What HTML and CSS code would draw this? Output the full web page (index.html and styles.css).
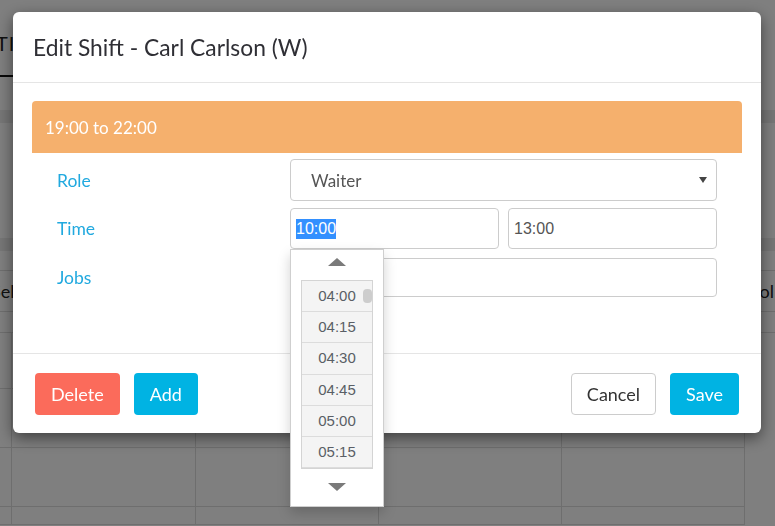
FILE: index.html
```html
<!DOCTYPE html>
<html lang="en">
<head>
    <meta charset="UTF-8" />
    <meta name="viewport" content="width=device-width, initial-scale=1.0" />
    <title>Edit Shift</title>
    <link rel="stylesheet" href="styles.css">
</head>
<body>

<!-- page behind the modal -->
<div class="page">
    <div class="page-tabs">
        <span class="page-tab">TI</span>
    </div>
    <div class="page-band band-top"></div>
    <div class="page-band band-mid"></div>
    <div class="page-row">
        <span class="page-row-left">Sele</span>
        <span class="page-row-right">Tool</span>
    </div>
    <div class="page-grid">
        <div class="grid-cell"></div><div class="grid-cell"></div><div class="grid-cell"></div><div class="grid-cell"></div><div class="grid-cell"></div>
        <div class="grid-cell"></div><div class="grid-cell"></div><div class="grid-cell"></div><div class="grid-cell"></div><div class="grid-cell"></div>
        <div class="grid-cell"></div><div class="grid-cell"></div><div class="grid-cell"></div><div class="grid-cell"></div><div class="grid-cell"></div>
        <div class="grid-cell"></div><div class="grid-cell"></div><div class="grid-cell"></div><div class="grid-cell"></div><div class="grid-cell"></div>
    </div>
</div>

<div class="backdrop"></div>

<div class="modal-wrap">
    <div class="modal">
        <div class="modal-header">
            <h4 class="modal-title">Edit Shift - Carl Carlson (W)</h4>
        </div>

        <div class="modal-body">
            <div class="shift-bar">19:00 to 22:00</div>

            <div class="shift-form">
                <div class="form-row row-role">
                    <label class="form-label">Role</label>
                    <div class="form-control select-box">
                        <span>Waiter</span>
                        <span class="select-caret"></span>
                    </div>
                </div>

                <div class="form-row row-time">
                    <label class="form-label">Time</label>
                    <div class="time-pair">
                        <div class="time-field">
                            <div class="form-control text-input"><span class="selected-text">10:00</span></div>

                            <div class="time-picker">
                                <div class="picker-up"><span class="arrow-up"></span></div>
                                <div class="picker-list">
                                    <div class="picker-item">04:00</div>
                                    <div class="picker-item">04:15</div>
                                    <div class="picker-item">04:30</div>
                                    <div class="picker-item">04:45</div>
                                    <div class="picker-item">05:00</div>
                                    <div class="picker-item">05:15</div>
                                    <span class="picker-thumb"></span>
                                </div>
                                <div class="picker-down"><span class="arrow-down"></span></div>
                            </div>
                        </div>
                        <div class="time-field">
                            <div class="form-control text-input">13:00</div>
                        </div>
                    </div>
                </div>

                <div class="form-row row-jobs">
                    <label class="form-label">Jobs</label>
                    <div class="form-control text-input"></div>
                </div>
            </div>
        </div>

        <div class="modal-footer">
            <div class="footer-group">
                <button class="btn btn-delete">Delete</button>
                <button class="btn btn-primary">Add</button>
            </div>
            <div class="footer-group">
                <button class="btn btn-default">Cancel</button>
                <button class="btn btn-primary">Save</button>
            </div>
        </div>
    </div>
</div>

</body>
</html>
```

FILE: styles.css
```css
:root {
    --blue: #00b3e3;
    --label-blue: #21a9df;
    --coral: #fb6b5b;
    --orange: #f5b06d;
    --border: #cccccc;
    --text: #333333;
    --muted: #555555;
}

* {
    box-sizing: border-box;
}

body {
    margin: 0;
    font-family: 'Lato', 'Open Sans', sans-serif;
    color: var(--text);
    background: #ffffff;
    overflow: hidden;
}

/* ---------- page behind ---------- */

.page {
    height: 526px;
    overflow: hidden;
}

.page-tabs {
    height: 77px;
    padding-top: 31px;
}

.page-tab {
    display: inline-block;
    width: 200px;
    height: 46px;
    margin-left: -4px;
    border-bottom: 2px solid #111;
    font-size: 20px;
    letter-spacing: 1px;
    color: #222;
}

.page-band {
    height: 13px;
    background: #ececec;
}

.band-top {
    margin-top: 33px;
}

.band-mid {
    margin-top: 115px;
}

.page-row {
    display: flex;
    justify-content: space-between;
    align-items: center;
    height: 42px;
    margin-top: 19px;
    border-top: 1px solid #ddd;
    border-bottom: 1px solid #ddd;
    font-size: 18px;
    color: #222;
}

.page-row-left {
    margin-left: -9px;
}

.page-row-right {
    margin-right: 1px;
}

.page-grid {
    display: grid;
    grid-template-columns: 12px 184px 183px 183px 183px;
    grid-template-rows: 56px 59px 59px 18px;
    margin-top: 20px;
    border-top: 1px solid #ddd;
}

.grid-cell {
    border-right: 1px solid #ddd;
    border-bottom: 1px solid #ddd;
}

.backdrop {
    position: fixed;
    inset: 0;
    background: rgba(0, 0, 0, 0.5);
}

/* ---------- modal ---------- */

.modal-wrap {
    position: fixed;
    inset: 0;
}

.modal {
    width: 748px;
    margin: 12px 0 0 13px;
    background: #fff;
    border-radius: 6px;
    box-shadow: 0 5px 15px rgba(0, 0, 0, 0.5);
}

.modal-header {
    display: flex;
    align-items: center;
    height: 71px;
    padding: 0 20px;
    border-bottom: 1px solid #e5e5e5;
}

.modal-title {
    margin: 0;
    font-size: 22.8px;
    font-weight: normal;
    color: #2f2f35;
}

.modal-body {
    padding: 18px 19px 56px;
}

.shift-bar {
    height: 52px;
    padding-left: 13px;
    display: flex;
    align-items: center;
    background: var(--orange);
    border-radius: 4px 4px 0 0;
    color: #fff;
    font-size: 17px;
}

.shift-form {
    padding: 6px 25px 0;
}

.form-row {
    display: flex;
    align-items: center;
}

.row-time {
    margin-top: 7px;
}

.row-jobs {
    margin-top: 9px;
}

.form-label {
    width: 233px;
    flex-shrink: 0;
    font-size: 17.5px;
    color: var(--label-blue);
}

.form-control {
    border: 1px solid var(--border);
    border-radius: 4px;
    background: #fff;
}

.select-box {
    flex: 1;
    height: 42px;
    display: flex;
    align-items: center;
    justify-content: space-between;
    padding: 0 9px 0 20px;
    font-size: 17px;
    color: var(--muted);
}

.select-caret {
    width: 0;
    height: 0;
    border-left: 4px solid transparent;
    border-right: 4px solid transparent;
    border-top: 6px solid #444;
}

.time-pair {
    flex: 1;
    display: flex;
    gap: 9px;
}

.time-field {
    flex: 1;
    position: relative;
}

.text-input {
    display: flex;
    align-items: center;
    padding-left: 5px;
    font-family: 'Liberation Sans', Arial, sans-serif;
    font-size: 16px;
    color: var(--muted);
}

.row-time .text-input {
    height: 41px;
}

.row-jobs .text-input {
    flex: 1;
    height: 39px;
}

.selected-text {
    background: #3390ff;
    color: #fff;
    line-height: 20px;
}

/* ---------- time picker ---------- */

.time-picker {
    position: absolute;
    top: 100%;
    left: 0;
    width: 94px;
    height: 258px;
    background: #fff;
    border: 1px solid #cfcfcf;
    box-shadow: 0 6px 12px rgba(0, 0, 0, 0.18);
    z-index: 5;
}

.picker-up {
    height: 30px;
    display: flex;
    justify-content: center;
    padding-top: 8px;
}

.picker-down {
    display: flex;
    justify-content: center;
    padding-top: 14px;
}

.arrow-up,
.arrow-down {
    width: 0;
    height: 0;
    border-left: 9px solid transparent;
    border-right: 9px solid transparent;
}

.arrow-up {
    border-bottom: 8px solid #7a7a7a;
}

.arrow-down {
    border-top: 8px solid #7a7a7a;
}

.picker-list {
    position: relative;
    margin: 0 10px;
    border: 1px solid #d4d4d4;
    overflow: hidden;
}

.picker-item {
    height: 31.2px;
    line-height: 30px;
    text-align: center;
    background: #f4f4f4;
    border-bottom: 1px solid #dcdcdc;
    font-family: 'Liberation Sans', Arial, sans-serif;
    font-size: 15px;
    color: #5a5f66;
}

.picker-thumb {
    position: absolute;
    top: 8px;
    right: 0;
    width: 9px;
    height: 14px;
    border-radius: 4px;
    background: #cdcdcd;
}

/* ---------- footer ---------- */

.modal-footer {
    display: flex;
    justify-content: space-between;
    padding: 19px 22px 18px;
    border-top: 1px solid #e5e5e5;
}

.footer-group {
    display: flex;
    gap: 14px;
}

.btn {
    height: 42px;
    padding: 0 15px;
    border: 1px solid transparent;
    border-radius: 4px;
    font-family: 'Lato', 'Open Sans', sans-serif;
    font-size: 18px;
    color: #fff;
    cursor: pointer;
}

.btn-delete {
    background: var(--coral);
}

.btn-primary {
    background: var(--blue);
}

.btn-default {
    background: #fff;
    border-color: var(--border);
    color: var(--text);
}
```
